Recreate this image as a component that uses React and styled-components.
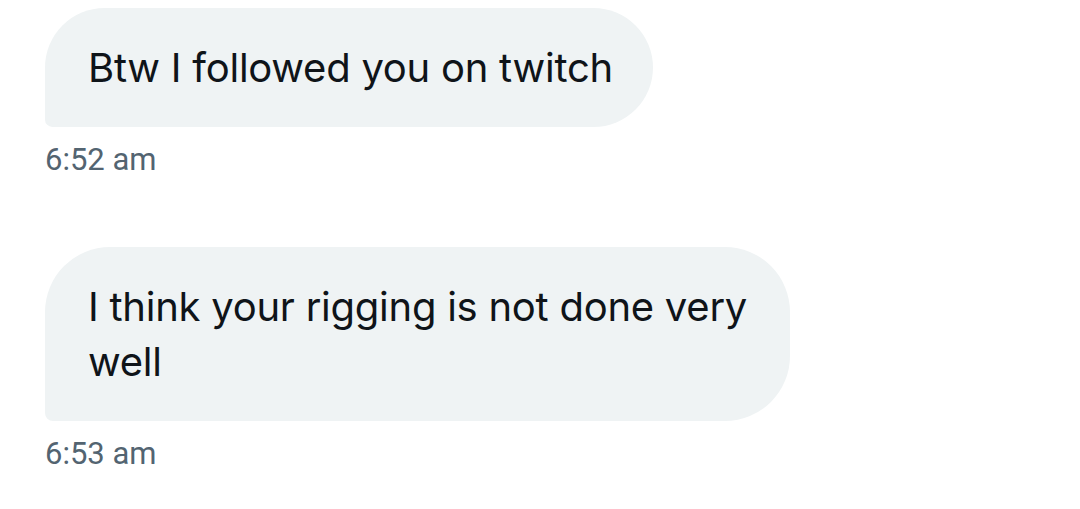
import React from 'react';
import styled, { createGlobalStyle } from 'styled-components';

const GlobalStyle = createGlobalStyle`
  html, body {
    margin: 0;
    padding: 0;
    background: #ffffff;
  }
`;

const Conversation = styled.div`
  display: flex;
  flex-direction: column;
  align-items: flex-start;
  padding: 8px 0 0 45px;
  width: 1080px;
  height: 509px;
  box-sizing: border-box;
`;

const Entry = styled.div`
  display: flex;
  flex-direction: column;
  align-items: flex-start;
  margin-bottom: ${props => props.gap || 0}px;
`;

const Bubble = styled.div`
  box-sizing: border-box;
  max-width: 745px;
  background: #eff3f4;
  color: #0f1419;
  font-family: 'Inter', 'Liberation Sans', sans-serif;
  font-size: 40px;
  line-height: 55px;
  letter-spacing: -0.25px;
  padding: 32px 40px 32px 43px;
  border-radius: 65px 65px 65px 8px;
`;

const Time = styled.div`
  margin-top: 13px;
  color: #536471;
  font-family: 'Roboto', 'Liberation Sans', sans-serif;
  font-size: 31px;
  line-height: 40px;
`;

const messages = [
  { text: 'Btw I followed you on twitch', time: '6:52 am', gap: 67 },
  { text: 'I think your rigging is not done very well', time: '6:53 am', gap: 0 },
];

const App = () => (
  <>
    <GlobalStyle />
    <Conversation>
      {messages.map(m => (
        <Entry key={m.time} gap={m.gap}>
          <Bubble>{m.text}</Bubble>
          <Time>{m.time}</Time>
        </Entry>
      ))}
    </Conversation>
  </>
);

export default App;
